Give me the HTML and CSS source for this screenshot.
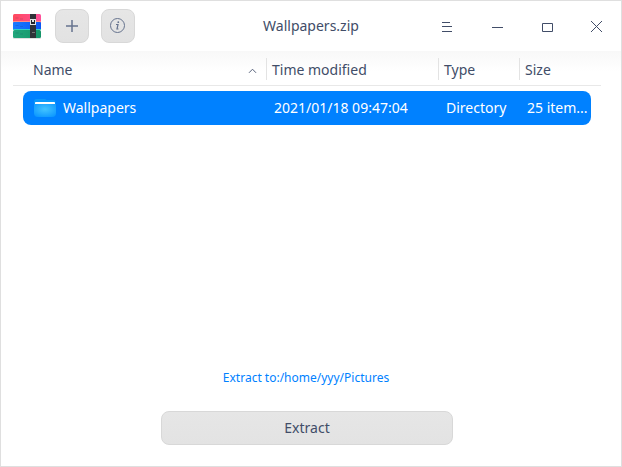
FILE: index.html
```html
<!DOCTYPE html>
<html lang="en">
<head>
<meta charset="utf-8">
<title>Wallpapers.zip</title>
<link rel="stylesheet" href="styles.css">
</head>
<body>
<div class="window">
  <header class="titlebar">
    <div class="tools">
      <svg class="logo" width="30" height="28" viewBox="0 0 30 28">
        <defs>
          <linearGradient id="red"><stop offset="0" stop-color="#ff4a5c"/><stop offset="1" stop-color="#ff4f9a"/></linearGradient>
          <linearGradient id="blue"><stop offset="0" stop-color="#1a7bff"/><stop offset="1" stop-color="#0a55f5"/></linearGradient>
          <linearGradient id="green"><stop offset="0" stop-color="#22a77c"/><stop offset="1" stop-color="#149468"/></linearGradient>
        </defs>
        <rect x="1" y="23" width="28" height="4" rx="1" fill="#000" opacity=".12"/>
        <rect x="1" y="2" width="28" height="9" rx="1.5" fill="url(#red)"/>
        <rect x="1" y="9" width="28" height="1" fill="#ff8c86"/>
        <rect x="1" y="10" width="28" height="8" rx="1" fill="url(#blue)"/>
        <rect x="1" y="17" width="28" height="1" fill="#2fd0c8"/>
        <rect x="1" y="18" width="28" height="8" rx="1.5" fill="url(#green)"/>
        <path d="M3.500 6h3M8 7h3M3.500 13.500h3M8 14.500h3M3.500 21h3M8 22h3" stroke="#163060" stroke-opacity=".18"/>
        <rect x="18" y="2" width="6" height="24" fill="#303238"/>
        <rect x="18" y="7" width="6" height="6" fill="#e2e2e2"/>
        <path d="M19 8v4h4V8h-1v2h-2V8z" fill="#202228"/>
        <path d="M20 20.500h3" stroke="#777"/>
      </svg>
      <button class="tool" aria-label="Add">
        <svg width="16" height="16" viewBox="0 0 16 16"><path d="M8 2v12M2 8h12" stroke="#66738e" stroke-width="1.500"/></svg>
      </button>
      <button class="tool" aria-label="Information">
        <svg width="16" height="16" viewBox="0 0 16 16" fill="none" stroke="#66738e"><circle cx="7.500" cy="7.500" r="7"/><path d="M6 6.500h2L7 11h1.500" stroke-width="1.200"/><circle cx="8.300" cy="4.200" r=".9" fill="#66738e" stroke="none"/></svg>
      </button>
    </div>
    <h1 class="title">Wallpapers.zip</h1>
    <div class="controls">
      <svg width="50" height="50" viewBox="0 0 50 50"><path d="M20 21.500h8M20 25.500h10M20 30.500h10"/></svg>
      <svg width="50" height="50" viewBox="0 0 50 50"><path d="M20 26.500h11"/></svg>
      <svg width="50" height="50" viewBox="0 0 50 50"><path d="M20.500 22.500h10v8h-10z"/></svg>
      <svg width="50" height="50" viewBox="0 0 50 50"><path d="M19 20l11 11M30 20l-11 11"/></svg>
    </div>
  </header>
  <main class="content">
    <div class="row head">
      <div class="cell">Name<svg class="sort" width="9" height="6" viewBox="0 0 9 6"><path d="M1 4.800l3.500-3.600L8 4.800" fill="none" stroke="#56617a"/></svg></div>
      <div class="cell">Time modified</div>
      <div class="cell">Type</div>
      <div class="cell">Size</div>
    </div>
    <div class="row item">
      <div class="cell name">
        <svg width="22" height="20" viewBox="0 0 22 20">
          <defs><radialGradient id="folder" cx=".5" cy=".4" r=".65"><stop offset="0" stop-color="#43c4ff"/><stop offset="1" stop-color="#0f9aff"/></radialGradient></defs>
          <path d="M0 4q0-3 2.500-3h8q1.500 0 2 1h7q2 0 2 2v4H0z" fill="#0a98fa"/>
          <rect x="1" y="4" width="20" height="4" rx=".7" fill="#fff"/>
          <path d="M0 6h22v9q0 4-4 4H4q-4 0-4-4z" fill="url(#folder)"/>
        </svg>
        <span>Wallpapers</span>
      </div>
      <div class="cell">2021/01/18 09:47:04</div>
      <div class="cell">Directory</div>
      <div class="cell">25 item...</div>
    </div>
  </main>
  <footer class="footer">
    <a class="path">Extract to:/home/yyy/Pictures</a>
    <button class="extract">Extract</button>
  </footer>
</div>
</body>
</html>
```
FILE: styles.css
```css
* {
  box-sizing: border-box;
}

body {
  margin: 0;
  font: 14px/20px "Noto Sans", sans-serif;
  color: #414d68;
}

.window {
  display: flex;
  flex-direction: column;
  width: 622px;
  height: 467px;
  border: 1px solid #dfdfdf;
  background: #fff;
  overflow: hidden;
}

.titlebar {
  display: grid;
  grid-template-columns: 200px 1fr 200px;
  height: 50px;
}

.tools {
  display: flex;
  align-items: center;
  padding-left: 11px;
}

.logo {
  margin-right: 13px;
}

.tool {
  display: flex;
  align-items: center;
  justify-content: center;
  width: 34px;
  height: 34px;
  margin-right: 12px;
  padding: 0;
  border: 1px solid #d8d8d8;
  border-radius: 8px;
  background: linear-gradient(#e6e6e6, #e2e2e2);
}

.title {
  margin: 0;
  font-size: 14px;
  font-weight: 400;
  line-height: 50px;
  text-align: center;
}

.controls {
  display: flex;
  margin-right: -1px;
  margin-left: 1px;
}

.controls path {
  fill: none;
  stroke: #414d68;
}

.content {
  flex: 1;
  background: linear-gradient(#f8f8f8, #fff 20px);
}

.row {
  display: grid;
  align-items: center;
}

.head {
  grid-template-columns: 253px 172px 81px 1fr;
  height: 35px;
  margin: 0 20px 0 12px;
  border-bottom: 1px solid #e8e8e8;
}

.head .cell {
  display: flex;
  align-items: center;
  height: 22px;
  padding: 2px 0 0 5px;
  border-left: 1px solid #e3e3e3;
}

.head .cell:first-child {
  justify-content: space-between;
  padding: 4px 9px 0 20px;
  border-left: 0;
}

.sort {
  margin-top: 1px;
}

.head .cell + .cell {
  margin-top: 1px;
}

.item {
  grid-template-columns: 251px 172px 81px 1fr;
  width: 568px;
  height: 34px;
  margin: 5px 0 0 22px;
  border-radius: 8px;
  background: #0081ff;
  color: #fff;
  white-space: nowrap;
}

.name {
  display: flex;
  align-items: center;
  gap: 7px;
  padding-left: 11px;
}

.footer {
  display: flex;
  flex-direction: column;
  align-items: center;
  width: 612px;
  padding-bottom: 21px;
}

.path {
  margin: 0 2px 23px 0;
  color: #0081ff;
  font-size: 12px;
  line-height: 20px;
}

.extract {
  width: 292px;
  height: 34px;
  padding: 0;
  border: 1px solid #d8d8d8;
  border-radius: 8px;
  background: linear-gradient(#e6e6e6, #e3e3e3);
  color: #414d68;
  font: inherit;
}
```
